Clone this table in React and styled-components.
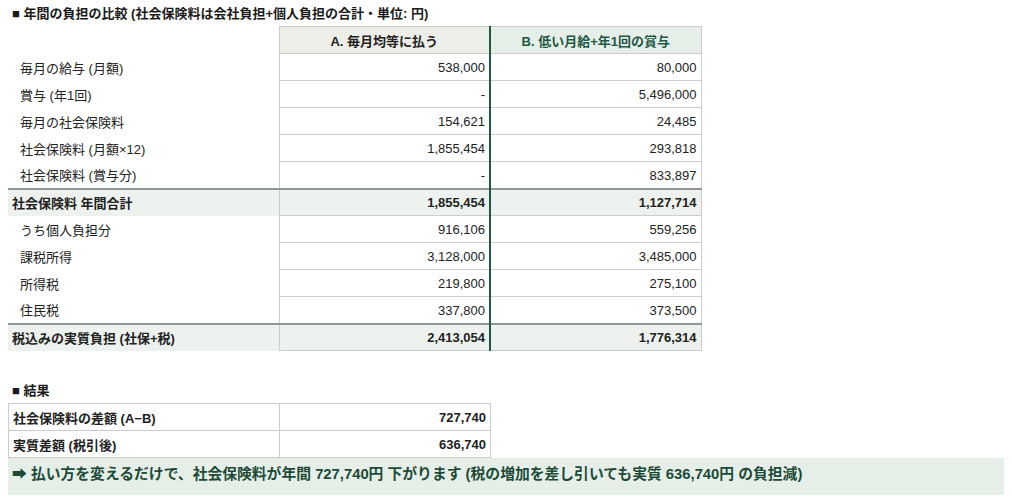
import React from "react";
import styled, { createGlobalStyle } from "styled-components";

const GlobalStyle = createGlobalStyle`
  body {
    margin: 0 8px;
    padding-top: 4px;
    background: #ffffff;
    color: #222222;
    font-family: "Liberation Sans", "Noto Sans CJK JP", sans-serif;
    font-size: 13px;
  }
`;

const SectionTitle = styled.div`
  font-weight: bold;
  font-size: 13px;
  line-height: 19px;
  padding-left: 4px;
  margin-top: ${(p) => p.$top || 0}px;
  margin-bottom: 3px;
  color: #1a1a1a;
`;

const Table = styled.table`
  border-collapse: collapse;
  table-layout: fixed;
  width: ${(p) => p.$width}px;
`;

const HeadCell = styled.th`
  height: 26px;
  padding: 0 4px;
  font-weight: bold;
  text-align: center;
  border: 1px solid #cccccc;
  background: ${(p) => (p.$b ? "#e5efe8" : "#eeeee9")};
  color: ${(p) => (p.$b ? "#1f5846" : "#222222")};
  ${(p) => p.$b && "border-left: 2px solid #1e5a46;"}
`;

const EmptyHead = styled.th`
  border: none;
`;

const Row = styled.tr`
  background: ${(p) => (p.$total ? "#eef2ee" : "transparent")};
  & > td {
    ${(p) => p.$total && "border-top: 2px solid #8e9790; height: 25px;"}
  }
`;

const Label = styled.td`
  height: 26px;
  padding: 0 4px 0 ${(p) => (p.$bold ? 4 : 12)}px;
  font-weight: ${(p) => (p.$bold ? "bold" : "normal")};
  white-space: nowrap;
  ${(p) => p.$boxed && "border: 1px solid #cccccc;"}
`;

const Num = styled.td`
  height: 26px;
  padding: 0 4px;
  text-align: right;
  border: 1px solid #cccccc;
  font-weight: ${(p) => (p.$bold ? "bold" : "normal")};
  ${(p) => p.$b && "border-left: 2px solid #1e5a46;"}
`;

const Banner = styled.div`
  background: #e5efe8;
  color: #1d4a37;
  font-weight: bold;
  font-size: 14.8px;
  line-height: 21px;
  padding: 6px 4px 10px;
`;

const rows = [
  { label: "毎月の給与 (月額)", a: "538,000", b: "80,000" },
  { label: "賞与 (年1回)", a: "-", b: "5,496,000" },
  { label: "毎月の社会保険料", a: "154,621", b: "24,485" },
  { label: "社会保険料 (月額×12)", a: "1,855,454", b: "293,818" },
  { label: "社会保険料 (賞与分)", a: "-", b: "833,897" },
  { label: "社会保険料 年間合計", a: "1,855,454", b: "1,127,714", total: true },
  { label: "うち個人負担分", a: "916,106", b: "559,256" },
  { label: "課税所得", a: "3,128,000", b: "3,485,000" },
  { label: "所得税", a: "219,800", b: "275,100" },
  { label: "住民税", a: "337,800", b: "373,500" },
  { label: "税込みの実質負担 (社保+税)", a: "2,413,054", b: "1,776,314", total: true },
];

const results = [
  { label: "社会保険料の差額 (A−B)", value: "727,740" },
  { label: "実質差額 (税引後)", value: "636,740" },
];

export default function App() {
  return (
    <>
      <GlobalStyle />
      <SectionTitle>■ 年間の負担の比較 (社会保険料は会社負担+個人負担の合計・単位: 円)</SectionTitle>
      <Table $width={693}>
        <colgroup>
          <col style={{ width: 271 }} />
          <col style={{ width: 211 }} />
          <col style={{ width: 211 }} />
        </colgroup>
        <thead>
          <tr>
            <EmptyHead />
            <HeadCell>A. 毎月均等に払う</HeadCell>
            <HeadCell $b>B. 低い月給+年1回の賞与</HeadCell>
          </tr>
        </thead>
        <tbody>
          {rows.map((r) => (
            <Row key={r.label} $total={r.total}>
              <Label $bold={r.total}>{r.label}</Label>
              <Num $bold={r.total}>{r.a}</Num>
              <Num $bold={r.total} $b>{r.b}</Num>
            </Row>
          ))}
        </tbody>
      </Table>

      <SectionTitle $top={30}>■ 結果</SectionTitle>
      <Table $width={482}>
        <colgroup>
          <col style={{ width: 271 }} />
          <col style={{ width: 211 }} />
        </colgroup>
        <tbody>
          {results.map((r) => (
            <Row key={r.label}>
              <Label $bold $boxed>{r.label}</Label>
              <Num $bold>{r.value}</Num>
            </Row>
          ))}
        </tbody>
      </Table>
      <Banner>
        ➡ 払い方を変えるだけで、社会保険料が年間 727,740円 下がります (税の増加を差し引いても実質 636,740円 の負担減)
      </Banner>
    </>
  );
}
